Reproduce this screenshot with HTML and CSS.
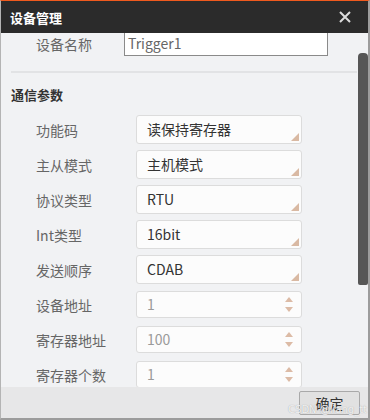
FILE: index.html
```html
<!DOCTYPE html>
<html lang="zh-CN">
<head>
    <meta charset="UTF-8">
    <meta name="viewport" content="width=device-width, initial-scale=1.0">
    <title>设备管理</title>
    <link rel="stylesheet" href="styles.css">
</head>
<body>
    <div class="window">
        <div class="titlebar">
            <span class="title">设备管理</span>
            <svg class="close" width="12" height="12" viewBox="0 0 12 12">
                <path d="M1 1L11 11M11 1L1 11" stroke="#dcdcdc" stroke-width="2" fill="none"/>
            </svg>
        </div>
        <div class="content">
            <div class="scroll">
                <div class="name-row">
                    <span class="label">设备名称</span>
                    <div class="name-input">Trigger1</div>
                </div>
                <div class="divider"></div>
                <div class="section">通信参数</div>
                <div class="rows">
                    <div class="row"><span class="label">功能码</span><div class="combo">读保持寄存器</div></div>
                    <div class="row"><span class="label">主从模式</span><div class="combo">主机模式</div></div>
                    <div class="row"><span class="label">协议类型</span><div class="combo">RTU</div></div>
                    <div class="row"><span class="label">Int类型</span><div class="combo">16bit</div></div>
                    <div class="row"><span class="label">发送顺序</span><div class="combo">CDAB</div></div>
                    <div class="row"><span class="label">设备地址</span><div class="spin">1</div></div>
                    <div class="row"><span class="label">寄存器地址</span><div class="spin">100</div></div>
                    <div class="row"><span class="label">寄存器个数</span><div class="spin">1</div></div>
                </div>
            </div>
            <div class="thumb"></div>
        </div>
        <div class="footer">
            <button class="ok">确定</button>
            <span class="mark">CSDN @liang_tt</span>
        </div>
    </div>
</body>
</html>
```

FILE: styles.css
```css
*{
    margin:0;
    padding:0;
    box-sizing:border-box;
}
body{
    width:370px;
    height:420px;
    font-family:"Noto Sans CJK SC","Noto Sans",sans-serif;
    background:#f1f2f4;
}
.window{
    width:370px;
    height:420px;
    display:flex;
    flex-direction:column;
    border-top:1px solid #f05a1e;
    border-left:1px solid #b4b4b4;
    border-right:2px solid #9c9c9c;
    border-bottom:2px solid #9c9c9c;
    overflow:hidden;
}
.titlebar{
    height:32px;
    flex:none;
    background:#2b2b2b;
    display:flex;
    align-items:center;
    justify-content:space-between;
    padding:0 17px 0 9px;
}
.titlebar .title{
    color:#fff;
    font-size:13px;
    font-weight:bold;
}
.content{
    flex:1;
    position:relative;
    overflow:hidden;
    background:#f1f2f4;
}
.scroll{
    margin-top:-2px;
    padding-left:10px;
}
.label{
    color:#666;
    font-size:14px;
}
.name-row{
    display:flex;
    align-items:center;
    height:25px;
    padding-left:25px;
}
.name-row .label{
    width:88px;
}
.name-input{
    width:204px;
    height:25px;
    border:1px solid #8a8a8a;
    background:#fff;
    color:#666;
    font-size:14px;
    line-height:23px;
    padding-left:3px;
}
.divider{
    height:2px;
    background:#e2e3e5;
    margin:15px 11px 0 0;
}
.section{
    margin-top:12px;
    height:20px;
    line-height:20px;
    font-size:13px;
    font-weight:bold;
    color:#333;
}
.rows{
    margin-top:10px;
    display:flex;
    flex-direction:column;
    gap:6px;
}
.row{
    display:flex;
    align-items:center;
    height:29px;
    padding-left:25px;
}
.row .label{
    width:100px;
}
.combo, .spin{
    position:relative;
    width:166px;
    border:1px solid #dcdcdc;
    border-radius:3px;
    background:#fcfcfc;
    font-size:14px;
    padding-left:10px;
}
.combo{
    height:29px;
    line-height:27px;
    color:#333;
}
.combo::after{
    content:"";
    position:absolute;
    right:2px;
    bottom:2px;
    border-style:solid;
    border-width:0 0 8px 8px;
    border-color:transparent transparent #d9b9a3 transparent;
}
.spin{
    height:27px;
    line-height:25px;
    color:#9a9a9a;
}
.spin::before, .spin::after{
    content:"";
    position:absolute;
    right:8px;
    border-style:solid;
    border-color:transparent;
}
.spin::before{
    top:5px;
    border-width:0 4px 5px 4px;
    border-bottom-color:#dcbba6;
}
.spin::after{
    bottom:5px;
    border-width:5px 4px 0 4px;
    border-top-color:#dcbba6;
}
.thumb{
    position:absolute;
    top:20px;
    right:0;
    width:10px;
    height:232px;
    background:#565656;
    border-radius:4px 4px 2px 2px;
}
.footer{
    height:31px;
    flex:none;
    background:#e7e7e8;
    position:relative;
    display:flex;
    align-items:center;
    justify-content:flex-end;
    padding-right:8px;
}
.ok{
    width:61px;
    height:24px;
    border:1px solid #a9a9a9;
    border-radius:2px;
    background:#e1e1e1;
    color:#333;
    font-family:"Noto Sans CJK SC",sans-serif;
    font-size:14px;
}
.mark{
    position:absolute;
    right:1px;
    bottom:3px;
    font-family:"DejaVu Sans",sans-serif;
    font-size:10px;
    color:rgba(255,255,255,0.85);
    text-shadow:0 0 1px #999;
}
```
